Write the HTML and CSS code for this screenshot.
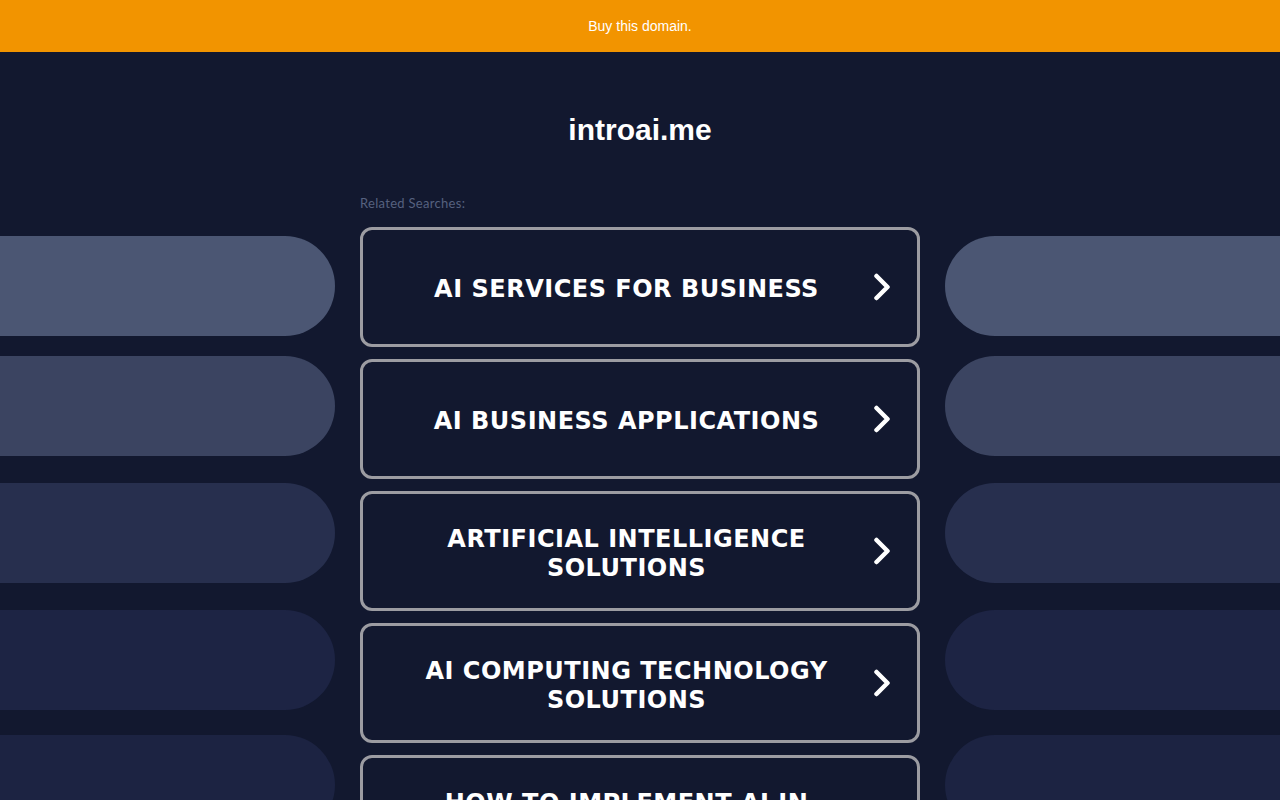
FILE: index.html
```html
<!DOCTYPE html>
<html lang="en">
<head>
<meta charset="utf-8">
<title>introai.me</title>
<link rel="stylesheet" href="styles.css">
</head>
<body>
<div class="banner"><a href="#" class="banner-link">Buy this domain.</a></div>
<header class="header"><h1 class="domain">introai.me</h1></header>
<main class="layout">
  <div class="side side-left">
    <div class="pill p1"></div>
    <div class="pill p2"></div>
    <div class="pill p3"></div>
    <div class="pill p4"></div>
    <div class="pill p5"></div>
  </div>
  <section class="center">
    <div class="label">Related Searches:</div>
    <div class="list">
      <a href="#" class="item"><span class="item-text">AI SERVICES FOR BUSINESS</span><svg class="chev" viewBox="0 0 18 28" width="18" height="28"><path d="M3.5 3 L14.5 14 L3.5 25"/></svg></a>
      <a href="#" class="item"><span class="item-text">AI BUSINESS APPLICATIONS</span><svg class="chev" viewBox="0 0 18 28" width="18" height="28"><path d="M3.5 3 L14.5 14 L3.5 25"/></svg></a>
      <a href="#" class="item"><span class="item-text">ARTIFICIAL INTELLIGENCE SOLUTIONS</span><svg class="chev" viewBox="0 0 18 28" width="18" height="28"><path d="M3.5 3 L14.5 14 L3.5 25"/></svg></a>
      <a href="#" class="item"><span class="item-text">AI COMPUTING TECHNOLOGY SOLUTIONS</span><svg class="chev" viewBox="0 0 18 28" width="18" height="28"><path d="M3.5 3 L14.5 14 L3.5 25"/></svg></a>
      <a href="#" class="item"><span class="item-text">HOW TO IMPLEMENT AI IN BUSINESS</span><svg class="chev" viewBox="0 0 18 28" width="18" height="28"><path d="M3.5 3 L14.5 14 L3.5 25"/></svg></a>
    </div>
  </section>
  <div class="side side-right">
    <div class="pill p1"></div>
    <div class="pill p2"></div>
    <div class="pill p3"></div>
    <div class="pill p4"></div>
    <div class="pill p5"></div>
  </div>
</main>
</body>
</html>
```
FILE: styles.css
```css
html, body {
  margin: 0;
  padding: 0;
  background: #12182f;
  overflow: hidden;
}
body {
  font-family: "Liberation Sans", Arial, sans-serif;
  color: #fff;
}
.banner {
  height: 52px;
  background: #f29400;
  display: flex;
  align-items: center;
  justify-content: center;
}
.banner-link {
  color: #fff;
  font-size: 14px;
  text-decoration: none;
  font-family: "Liberation Sans", Arial, sans-serif;
}
.header {
  padding-top: 61px;
  height: 82px;
  box-sizing: border-box;
  text-align: center;
}
.domain {
  margin: 0;
  font-size: 30px;
  line-height: 34px;
  font-weight: bold;
  font-family: "Liberation Sans", Arial, sans-serif;
  color: #fff;
}
.layout {
  display: grid;
  grid-template-columns: 1fr 560px 1fr;
  column-gap: 25px;
  margin-top: 62px;
}
.side {
  padding-top: 40px;
  display: flex;
  flex-direction: column;
}
.pill {
  height: 100px;
  flex: none;
}
.side-left .pill { border-radius: 0 50px 50px 0; }
.side-right .pill { border-radius: 50px 0 0 50px; }
.p1 { background: #4b5673; }
.p2 { background: #3b4461; margin-top: 20px; }
.p3 { background: #272f4e; margin-top: 27px; }
.p4 { background: #1d2444; margin-top: 27px; }
.p5 { background: #1c2342; margin-top: 25px; }
.label {
  font-family: Lato, "Open Sans", sans-serif;
  font-size: 13px;
  line-height: 14px;
  color: #56617f;
  letter-spacing: 0.3px;
  margin-bottom: 17px;
}
.list {
  display: flex;
  flex-direction: column;
  gap: 12px;
}
.item {
  height: 120px;
  box-sizing: border-box;
  border: 3px solid #9c9ca2;
  border-radius: 12px;
  display: flex;
  align-items: center;
  padding: 0 26px 0 30px;
  text-decoration: none;
  color: #fff;
  background: #12182f;
}
.item-text {
  flex: 1;
  text-align: center;
  font-family: "DejaVu Sans", Verdana, sans-serif;
  font-weight: bold;
  font-size: 24px;
  line-height: 29px;
  letter-spacing: 0.5px;
  margin-right: 13px;
  margin-top: 5px;
}
.chev {
  flex: none;
  fill: none;
  stroke: #fff;
  stroke-width: 4.5;
  stroke-linecap: round;
  stroke-linejoin: round;
}
```
